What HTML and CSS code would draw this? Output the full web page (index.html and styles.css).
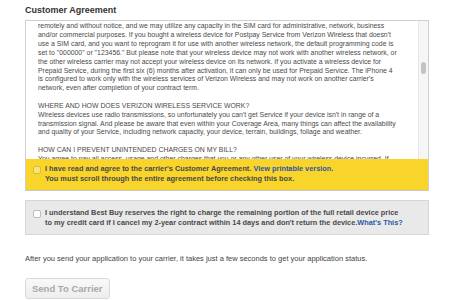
FILE: index.html
```html
<!DOCTYPE html>
<html lang="en">
<head>
  <meta charset="UTF-8" />
  <title>Carrier Application</title>
  <link rel="stylesheet" href="styles.css">
</head>
<body>
  <h2 class="section-title">Customer Agreement</h2>
  <div class="agreement">
    <div class="terms-wrap">
      <div class="terms">
        <p>remotely and without notice, and we may utilize any capacity in the SIM card for administrative, network, business and/or commercial purposes. If you bought a wireless device for Postpay Service from Verizon Wireless that doesn't use a SIM card, and you want to reprogram it for use with another wireless network, the default programming code is set to "000000" or "123456." But please note that your wireless device may not work with another wireless network, or the other wireless carrier may not accept your wireless device on its network. If you activate a wireless device for Prepaid Service, during the first six (6) months after activation, it can only be used for Prepaid Service. The iPhone 4 is configured to work only with the wireless services of Verizon Wireless and may not work on another carrier's network, even after completion of your contract term.</p>
        <p>WHERE AND HOW DOES VERIZON WIRELESS SERVICE WORK?<br>Wireless devices use radio transmissions, so unfortunately you can't get Service if your device isn't in range of a transmission signal. And please be aware that even within your Coverage Area, many things can affect the availability and quality of your Service, including network capacity, your device, terrain, buildings, foliage and weather.</p>
        <p>HOW CAN I PREVENT UNINTENDED CHARGES ON MY BILL?<br>You agree to pay all access, usage and other charges that you or any other user of your wireless device incurred. If</p>
      </div>
      <div class="track"><div class="thumb"></div></div>
    </div>
    <label class="check-row agree">
      <span class="box"></span>
      <span>I have read and agree to the carrier's Customer Agreement. <a href="#">View printable version.</a><br>You must scroll through the entire agreement before checking this box.</span>
    </label>
  </div>

  <label class="check-row notice">
    <span class="box"></span>
    <span>I understand Best Buy reserves the right to charge the remaining portion of the full retail device price to my credit card if I cancel my 2-year contract within 14 days and don't return the device.<a href="#">What's This?</a></span>
  </label>

  <p class="after">After you send your application to your carrier, it takes just a few seconds to get your application status.</p>

  <button class="send" disabled>Send To Carrier</button>
</body>
</html>
```

FILE: styles.css
```css
body { margin: 0; padding: 6px 37px 0 25px; font-family: "Liberation Sans", Arial, sans-serif; color: #444; background: #fff; }
.section-title { margin: 0 0 5px; font-size: 9px; line-height: 9px; color: #333; }
.agreement { border: 1px solid #cfcfcf; border-bottom-color: #c8c8c8; }
.terms-wrap { display: flex; height: 138px; }
.terms { flex: 1; overflow: hidden; padding: 1px 20px 0 12px; font-size: 6.9px; line-height: 8.9px; color: #4a4a4a; }
.terms p { margin: 0 0 8.5px; }
.track { width: 9px; background: #f6f6f6; border-left: 1px solid #e6e6e6; }
.thumb { width: 5px; height: 12px; margin: 41px auto 0; border-radius: 3px; background: #c3c3c3; }
.check-row { display: flex; gap: 4px; font-size: 7.35px; line-height: 10px; font-weight: bold; color: #4a4a4a; }
.check-row a { color: #2b58a8; text-decoration: none; }
.box { flex: none; width: 6px; height: 6px; margin-top: 2px; border: 1px solid #bdbdbd; border-radius: 2px; background: #fff; }
.agree { padding: 5px 8px 6px 7px; background: #f9d42a; }
.agree .box { background: #f8e27e; border-color: #d9bd3c; }
.notice { margin-top: 9px; padding: 7px 22px 6px 7px; background: #e9e9e9; border: 1px solid #d7d7d7; }
.after { margin: 19px 0 0; font-size: 7.5px; line-height: 9px; color: #444; }
.send { margin-top: 15px; padding: 4px 6px; font-family: inherit; font-size: 9.5px; font-weight: bold; color: #a9a9a9; background: linear-gradient(#f9f9f9, #ededed); border: 1px solid #d9d9d9; border-radius: 3px; }
```
